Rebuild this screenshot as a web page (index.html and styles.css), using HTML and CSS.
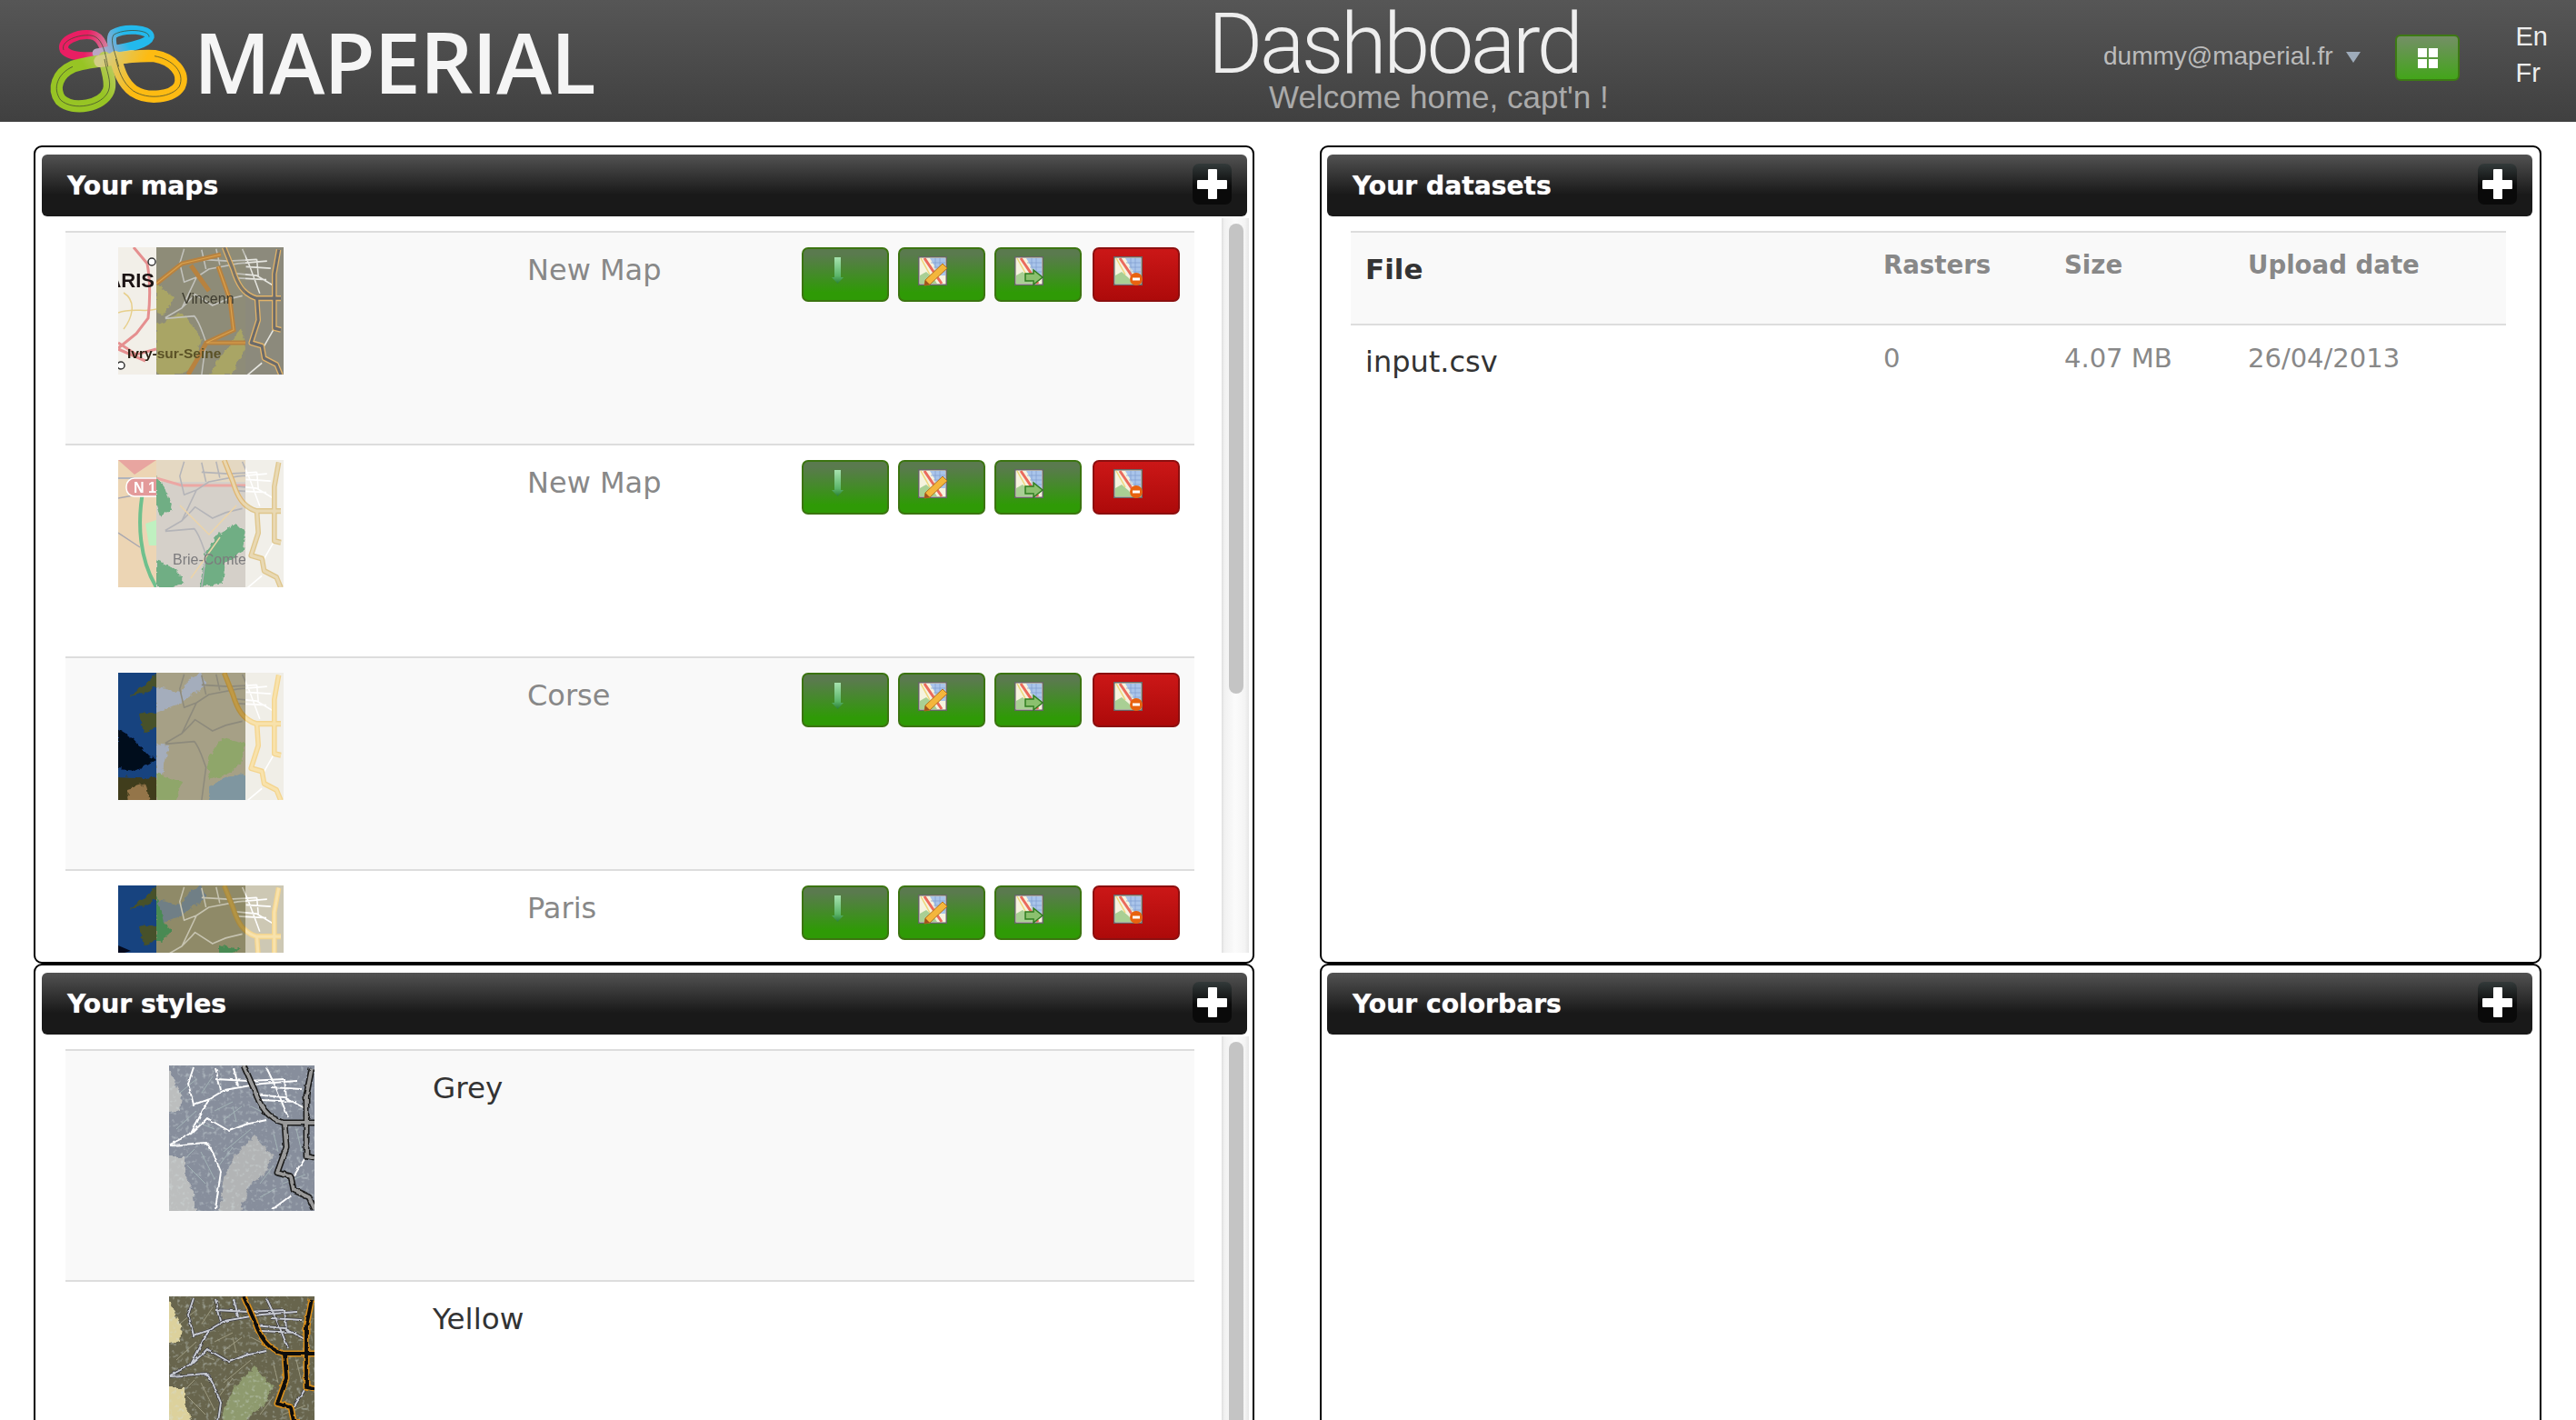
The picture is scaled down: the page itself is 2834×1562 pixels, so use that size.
FILE: index.html
```html
<!DOCTYPE html>
<html lang="en">
<head>
    <meta charset="UTF-8">
    <title>Maperial - Dashboard</title>
    <link rel="stylesheet" href="styles.css">
</head>
<body>
    <!-- shared drawings for thumbnails and button icons -->
    <svg class="sprites" aria-hidden="true">
        <defs>
            <linearGradient id="lg-pink" gradientUnits="userSpaceOnUse" x1="50" y1="90" x2="230" y2="120"><stop offset="0.45" stop-color="#e91e63"/><stop offset="1" stop-color="#c9a7b5"/></linearGradient>
            <linearGradient id="lg-blue" gradientUnits="userSpaceOnUse" x1="340" y1="50" x2="190" y2="120"><stop offset="0.45" stop-color="#23b9ec"/><stop offset="1" stop-color="#bba6c4"/></linearGradient>
            <linearGradient id="lg-green" gradientUnits="userSpaceOnUse" x1="60" y1="260" x2="270" y2="120"><stop offset="0.45" stop-color="#97c424"/><stop offset="1" stop-color="#d4cf8c"/></linearGradient>
            <linearGradient id="lg-orange" gradientUnits="userSpaceOnUse" x1="430" y1="240" x2="190" y2="130"><stop offset="0.5" stop-color="#fdbb12"/><stop offset="1" stop-color="#d3cd86"/></linearGradient>
            <linearGradient id="lg-arrow" x1="0" y1="0" x2="0" y2="1"><stop offset="0" stop-color="#a6e2ae"/><stop offset=".7" stop-color="#5cb56a"/><stop offset="1" stop-color="#2a7f36"/></linearGradient>

            <filter id="rough" x="-5%" y="-5%" width="110%" height="110%">
                <feTurbulence type="fractalNoise" baseFrequency=".16" numOctaves="2" seed="4"/>
                <feDisplacementMap in="SourceGraphic" scale="7" xChannelSelector="R" yChannelSelector="G"/>
            </filter>
            <filter id="wiggle" x="-5%" y="-5%" width="110%" height="110%">
                <feTurbulence type="fractalNoise" baseFrequency=".12" numOctaves="2" seed="9"/>
                <feDisplacementMap in="SourceGraphic" scale="3" xChannelSelector="R" yChannelSelector="G"/>
            </filter>
            <filter id="speckle" x="0" y="0" width="100%" height="100%">
                <feTurbulence type="fractalNoise" baseFrequency=".22" numOctaves="2" seed="2"/>
                <feColorMatrix values="0 0 0 0 .66  0 0 0 0 .74  0 0 0 0 .74  0 0 0 1.5 -.82"/>
            </filter>

            <clipPath id="strip-l"><rect width="42" height="140"/></clipPath>
            <clipPath id="strip-m"><rect x="42" width="98" height="140"/></clipPath>
            <clipPath id="strip-r"><rect x="140" width="42" height="140"/></clipPath>

            <path id="minor-path" d="M1 87 24 75 37 63 42 58 66 72 84 65 107 60M24 75 44 37 61 27 101 20 141 17M1 88 41 85C48 92 52 105 57 117L51 158M27 2 21 20 27 43 44 37M51 3 57 27M107 2 117 23 131 57M94 32 127 35 151 48M51 15 87 17 127 15M151 100 137 122M114 158 134 143M71 2 76 22M127 15 129 36M101 38 140 40M112 24 146 26"/>
            <path id="hw-path" d="M82 0 94 27C100 45 108 58 126 63H160M127 63 129 90 119 118 134 122 137 137 154 145 160 158M157 3 151 33V100L160 102"/>
            <g id="roads">
                <use href="#minor-path" class="minor-case"/>
                <use href="#minor-path" class="minor"/>
                <use href="#hw-path" class="hw-case"/>
                <use href="#hw-path" class="hw-core"/>
            </g>
            <g id="map-roads" transform="translate(51 0) scale(.8 .89)"><use href="#roads"/></g>

            <g id="style-art">
                <rect class="st-base" width="160" height="160"/>
                <g filter="url(#rough)">
                    <path class="st-land2" d="M-5 -5 14 33 12 50 -5 53ZM-5 100H17V118L27 140 31 165H-5Z"/>
                    <path class="st-land" d="M61 123 74 97 94 77 114 100 107 117 87 133 77 165H55Z"/>
                </g>
                <rect class="st-speckle" width="160" height="160" filter="url(#speckle)"/>
                <path class="st-fine" d="M8 70 30 50M50 50 70 40M60 60 80 45M90 45 110 55M20 110 40 130M35 95 50 125M60 95 90 70M100 130 115 110M125 130 150 120M140 70 146 95M12 30 30 15M70 90 55 110M115 75 120 95M36 30 48 12M70 45 74 62M30 62 50 70M20 100 28 92M100 145 118 135"/>
                <g filter="url(#wiggle)"><use href="#roads"/></g>
            </g>

            <g id="map-icon">
                <rect x=".75" y=".75" width="30.5" height="30.5" fill="#f6f3df" stroke="#666" stroke-width="1.5"/>
                <path d="M13 2H30V21H24Z" fill="#a9c4ea"/>
                <path d="M19 2V21M24 2V21M14 7H30M17 12H30M20 17H30" stroke="#7f9fd0" stroke-width=".7"/>
                <path d="M2 30V21L9 17 17 24 21 30Z" fill="#a9cf94"/>
                <path d="M7 2 26 30" stroke="#ea6a5c" stroke-width="3"/>
                <path d="M3 2 13 20" stroke="#eed77a" stroke-width="1.5"/>
            </g>
            <g id="ic-down"><path d="M14 1H21V23H24L17.5 30 11 23H14Z" fill="url(#lg-arrow)"/></g>
            <g id="ic-edit"><use href="#map-icon"/><path d="M27 8 32 13 13 31 7 32 8 26Z" fill="#f4b63c" stroke="#b5741e"/><path d="M7 32 8 26 13 31Z" fill="#a0521e"/></g>
            <g id="ic-open"><use href="#map-icon"/><path d="M12 19H21V15L31 23 21 31V27H12Z" fill="#8bc06e" stroke="#2f7d1f" stroke-width="1.5"/></g>
            <g id="ic-del"><use href="#map-icon"/><circle cx="25" cy="25" r="7" fill="#e8620f"/><rect x="21" y="23.5" width="8" height="3" fill="#fff"/></g>
        </defs>
    </svg>

    <header class="topbar">
        <div class="brand">
            <svg class="brand-mark" viewBox="0 0 495 330">
                <g fill="none" stroke-linecap="round">
                    <path stroke-width="30" stroke="url(#lg-pink)" d="M240 118C170 128 85 135 62 105 48 72 110 50 150 55 188 60 198 105 208 165"/>
                    <path stroke-width="30" stroke="url(#lg-blue)" d="M170 115C240 100 335 92 344 62 345 35 262 30 224 52 208 72 230 120 240 165"/>
                    <path stroke-width="40" stroke="url(#lg-green)" d="M285 125C200 140 130 145 90 160 40 182 22 232 50 270 92 308 188 290 208 240 220 210 200 170 195 130"/>
                    <path stroke-width="40" stroke="url(#lg-orange)" d="M180 142C260 130 310 122 360 125 420 135 462 180 442 225 420 260 340 272 290 240 252 212 242 170 230 128"/>
                </g>
                <g fill="none" stroke="#3f4a30" stroke-opacity=".75" stroke-width="3">
                    <path d="M60 105C48 75 110 52 150 57 186 62 196 105 206 160"/>
                    <path d="M342 62C344 37 262 33 226 54 210 72 232 120 242 160"/>
                    <path d="M90 160C40 182 22 232 50 270 92 308 188 290 208 240 220 210 200 170 195 135"/>
                    <path d="M360 125C420 135 462 180 442 225 420 260 340 272 290 240 252 212 242 170 232 135"/>
                </g>
            </svg>
            <span class="brand-name">MAPERIAL</span>
        </div>
        <div class="page-title">
            <h1>Dashboard</h1>
            <p>Welcome home, capt'n !</p>
        </div>
        <div class="account">
            <span class="account-mail">dummy@maperial.fr</span>
            <span class="caret"></span>
            <a class="apps-btn"><span class="apps-grid"><i></i><i></i><i></i><i></i></span></a>
        </div>
        <div class="langs">
            <span>En</span>
            <span>Fr</span>
        </div>
    </header>

    <main class="board">
        <section class="panel panel-left">
            <div class="panel-bar"><h2>Your maps</h2><a class="add-btn"></a></div>
            <div class="panel-body">
                <div class="list">
                    <div class="row row-odd map-row">
                        <svg class="map-thumb" viewBox="0 0 182 140">
                            <g clip-path="url(#strip-l)">
                                <rect width="42" height="140" fill="#f2efe8"/>
                                <path d="M6 50C22 60 14 80 6 90M0 72C15 66 30 72 42 68" fill="none" stroke="#e7cf8b" stroke-width="1.5"/>
                                <path d="M17 0 32 18C36 40 35 60 33 78L20 95 0 111M0 105 20 118 42 112M0 112 30 125" fill="none" stroke="#e58f8f" stroke-width="3"/>
                                <circle cx="37" cy="16" r="4" fill="#fff" stroke="#333" stroke-width="1.5"/>
                                <circle cx="3" cy="130" r="4" fill="#fff" stroke="#333" stroke-width="1.5"/>
                                <text class="map-label map-label-big" x="40" y="44" text-anchor="end">ARIS</text>
                                <text class="map-label map-label-town" x="10" y="122" fill="#2a2014">Ivry-sur-Seine</text>
                            </g>
                            <g clip-path="url(#strip-m)">
                                <rect x="42" width="98" height="140" fill="#8e8c78"/>
                                <path filter="url(#rough)" d="M42 85 70 72 92 100 84 130 70 140H42ZM100 140 135 90 140 110 125 140ZM42 40 62 55 50 75 42 72Z" fill="#a9a565"/>
                                <g class="tone-paris-m"><use href="#map-roads"/></g>
                                <path d="M42 40 70 18 113 8M80 20 100 48M110 21 123 58 127 91 97 105 90 118 77 140M97 105 140 105" fill="none" stroke="#b8823f" stroke-width="5"/>
                                <path d="M42 40 70 18 113 8M110 21 123 58 127 91 97 105 140 105" fill="none" stroke="#dba24d" stroke-width="1.2"/>
                                <text class="map-label-soft" x="70" y="62" fill="#3e3c30">Vincenn</text>
                                <text class="map-label map-label-town" x="10" y="122" fill="#5a5126">Ivry-sur-Seine</text>
                            </g>
                            <g clip-path="url(#strip-r)">
                                <rect x="140" width="42" height="140" fill="#8c8a7c"/>
                                <g class="tone-paris-r"><use href="#map-roads"/></g>
                            </g>
                        </svg>
                        <span class="row-name map-name">New Map</span>
                        <div class="row-actions">
                            <a class="btn btn-green"><svg class="btn-icon" viewBox="0 0 32 32"><use href="#ic-down"/></svg></a>
                            <a class="btn btn-green"><svg class="btn-icon" viewBox="0 0 32 32"><use href="#ic-edit"/></svg></a>
                            <a class="btn btn-green"><svg class="btn-icon" viewBox="0 0 32 32"><use href="#ic-open"/></svg></a>
                            <a class="btn btn-red"><svg class="btn-icon" viewBox="0 0 32 32"><use href="#ic-del"/></svg></a>
                        </div>
                    </div>
                    <div class="row map-row">
                        <svg class="map-thumb" viewBox="0 0 182 140">
                            <g clip-path="url(#strip-l)">
                                <rect width="42" height="140" fill="#ecd5b4"/>
                                <path d="M0 0 18 16 42 0" fill="#e8a5a0"/>
                                <path d="M0 20H42" stroke="#b0b4bc" stroke-width="2"/>
                                <path d="M0 42 22 38M0 80 24 96" stroke="#a9a8b0" stroke-width="1.5"/>
                                <path d="M28 30C20 70 24 110 42 140" fill="none" stroke="#6fc08d" stroke-width="4"/>
                                <path d="M30 70 42 66V94H34Z" fill="#bff0c0"/>
                                <rect x="9" y="20" width="50" height="20" rx="9" fill="#e39a9a" stroke="#fff" stroke-width="1.5"/>
                                <text class="map-label map-label-shield" x="17" y="36" fill="#fff">N 1</text>
                            </g>
                            <g clip-path="url(#strip-m)">
                                <rect x="42" width="98" height="140" fill="#d5d0c9"/>
                                <path d="M42 0H140V24H42Z" fill="#e4d8c2"/>
                                <path d="M42 20 70 28 140 28" fill="none" stroke="#eca7a3" stroke-width="3"/>
                                <path filter="url(#rough)" d="M96 100 110 82 130 70 140 80 138 100 118 112 115 135 90 140ZM42 110 58 116 74 135 60 140H42ZM42 18 52 30 60 55 46 62 42 50Z" fill="#6fae84"/>
                                <g class="tone-light-m"><use href="#map-roads"/></g>
                                <path d="M68 50 100 82 130 50M112 85 80 130" fill="none" stroke="#ecd4a8" stroke-width="1.5"/>
                                <text class="map-label-soft" x="60" y="115" fill="#7c7b7d">Brie-Comte-</text>
                            </g>
                            <g clip-path="url(#strip-r)">
                                <rect x="140" width="42" height="140" fill="#f1efe9"/>
                                <g class="tone-light-r"><use href="#map-roads"/></g>
                            </g>
                        </svg>
                        <span class="row-name map-name">New Map</span>
                        <div class="row-actions">
                            <a class="btn btn-green"><svg class="btn-icon" viewBox="0 0 32 32"><use href="#ic-down"/></svg></a>
                            <a class="btn btn-green"><svg class="btn-icon" viewBox="0 0 32 32"><use href="#ic-edit"/></svg></a>
                            <a class="btn btn-green"><svg class="btn-icon" viewBox="0 0 32 32"><use href="#ic-open"/></svg></a>
                            <a class="btn btn-red"><svg class="btn-icon" viewBox="0 0 32 32"><use href="#ic-del"/></svg></a>
                        </div>
                    </div>
                    <div class="row row-odd map-row">
                        <svg class="map-thumb" viewBox="0 0 182 140">
                            <g clip-path="url(#strip-l)">
                                <rect width="42" height="140" fill="#17437f"/>
                                <path filter="url(#rough)" d="M14 26 22 16 30 14 42 0V16L28 22ZM22 46 34 44 42 46V60L30 66Z" fill="#46512a"/>
                                <path filter="url(#rough)" d="M0 62 16 72 34 92 42 96 20 108 0 106Z" fill="#040a1e"/>
                                <path filter="url(#rough)" d="M-4 114 46 116V144H-4Z" fill="#3f3c1e"/>
                                <path filter="url(#rough)" d="M10 128 30 122 36 144H12Z" fill="#94744a"/>
                            </g>
                            <g clip-path="url(#strip-m)">
                                <rect x="42" width="98" height="140" fill="#a6a086"/>
                                <path filter="url(#rough)" d="M42 16 70 22 78 6 92 0 96 14 66 34 42 44ZM42 78 56 80 48 112 42 114Z" fill="#a4adbc"/>
                                <path filter="url(#rough)" d="M42 110 70 120 62 144H42ZM98 95 115 72 140 78 135 100 118 112 100 118Z" fill="#8fa66a"/>
                                <path filter="url(#rough)" d="M100 125 120 115 144 110V144H100Z" fill="#7f96a0"/>
                                <g class="tone-corse-m"><use href="#map-roads"/></g>
                            </g>
                            <g clip-path="url(#strip-r)">
                                <rect x="140" width="42" height="140" fill="#f0eee7"/>
                                <g class="tone-corse-r"><use href="#map-roads"/></g>
                            </g>
                        </svg>
                        <span class="row-name map-name">Corse</span>
                        <div class="row-actions">
                            <a class="btn btn-green"><svg class="btn-icon" viewBox="0 0 32 32"><use href="#ic-down"/></svg></a>
                            <a class="btn btn-green"><svg class="btn-icon" viewBox="0 0 32 32"><use href="#ic-edit"/></svg></a>
                            <a class="btn btn-green"><svg class="btn-icon" viewBox="0 0 32 32"><use href="#ic-open"/></svg></a>
                            <a class="btn btn-red"><svg class="btn-icon" viewBox="0 0 32 32"><use href="#ic-del"/></svg></a>
                        </div>
                    </div>
                    <div class="row map-row">
                        <svg class="map-thumb" viewBox="0 0 182 140">
                            <g clip-path="url(#strip-l)">
                                <rect width="42" height="140" fill="#17437f"/>
                                <path filter="url(#rough)" d="M14 26 22 16 30 14 42 0V16L28 22ZM22 46 34 44 42 46V60L30 66Z" fill="#46512a"/>
                                <path d="M0 66 14 72 0 76Z" fill="#040a1e"/>
                            </g>
                            <g clip-path="url(#strip-m)">
                                <rect x="42" width="98" height="140" fill="#8f8a68"/>
                                <path filter="url(#rough)" d="M42 16 70 22 78 6 92 0 96 14 66 34 42 44Z" fill="#6f7f86"/>
                                <path filter="url(#rough)" d="M42 10 50 40 60 50 48 62 42 60ZM110 66 135 70 125 76H110Z" fill="#4a8a52"/>
                                <g class="tone-paris2-m"><use href="#map-roads"/></g>
                            </g>
                            <g clip-path="url(#strip-r)">
                                <rect x="140" width="42" height="140" fill="#cdc8b4"/>
                                <g class="tone-corse-r"><use href="#map-roads"/></g>
                            </g>
                        </svg>
                        <span class="row-name map-name">Paris</span>
                        <div class="row-actions">
                            <a class="btn btn-green"><svg class="btn-icon" viewBox="0 0 32 32"><use href="#ic-down"/></svg></a>
                            <a class="btn btn-green"><svg class="btn-icon" viewBox="0 0 32 32"><use href="#ic-edit"/></svg></a>
                            <a class="btn btn-green"><svg class="btn-icon" viewBox="0 0 32 32"><use href="#ic-open"/></svg></a>
                            <a class="btn btn-red"><svg class="btn-icon" viewBox="0 0 32 32"><use href="#ic-del"/></svg></a>
                        </div>
                    </div>
                </div>
                <div class="scrolltrack"><div class="scrollthumb"></div></div>
            </div>
        </section>

        <section class="panel panel-right">
            <div class="panel-bar"><h2>Your datasets</h2><a class="add-btn"></a></div>
            <div class="panel-body">
                <table class="data-table">
                    <thead>
                        <tr>
                            <th class="col-file">File</th>
                            <th class="col-rasters">Rasters</th>
                            <th class="col-size">Size</th>
                            <th>Upload date</th>
                        </tr>
                    </thead>
                    <tbody>
                        <tr>
                            <td class="col-file">input.csv</td>
                            <td>0</td>
                            <td>4.07 MB</td>
                            <td>26/04/2013</td>
                        </tr>
                    </tbody>
                </table>
            </div>
        </section>

        <section class="panel panel-left">
            <div class="panel-bar"><h2>Your styles</h2><a class="add-btn"></a></div>
            <div class="panel-body">
                <div class="list">
                    <div class="row row-odd style-row">
                        <svg class="style-thumb style-grey" viewBox="0 0 160 160"><use href="#style-art"/></svg>
                        <span class="row-name style-name">Grey</span>
                    </div>
                    <div class="row style-row">
                        <svg class="style-thumb style-yellow" viewBox="0 0 160 160"><use href="#style-art"/></svg>
                        <span class="row-name style-name">Yellow</span>
                    </div>
                </div>
                <div class="scrolltrack"><div class="scrollthumb"></div></div>
            </div>
        </section>

        <section class="panel panel-right">
            <div class="panel-bar"><h2>Your colorbars</h2><a class="add-btn"></a></div>
            <div class="panel-body"></div>
        </section>
    </main>
</body>
</html>
```

FILE: styles.css
```css
:root {
    --line: #dddddd;
    --stripe: #f9f9f9;
    --muted: #888888;
    --dark: #333333;
    --body-font: "DejaVu Sans", sans-serif;
    --head-font: "Liberation Sans", Arial, sans-serif;
}

html, body {
    height: 100%;
}

body {
    margin: 0;
    overflow: hidden;
    background: #fff;
    font-family: var(--body-font);
    color: var(--dark);
}

.sprites {
    display: block;
    width: 0;
    height: 0;
}

/* top bar */
.topbar {
    display: flex;
    height: 134px;
    background: linear-gradient(#565656, #404040);
}

.brand {
    display: flex;
    flex: none;
    width: 1279px;
    margin-left: 50px;
    padding-top: 20px;
    box-sizing: border-box;
}

.brand-mark {
    flex: none;
    width: 165px;
    height: 110px;
}

.brand-name {
    margin: 0 0 0 -2px;
    height: 100px;
    font-family: "Open Sans", sans-serif;
    font-size: 92px;
    font-weight: 600;
    line-height: 95px;
    letter-spacing: -1.2px;
    color: #f5f5f5;
}

.page-title {
    flex: none;
    width: 465px;
}

.page-title h1 {
    margin: 0;
    padding-top: 11px;
    font-family: Roboto, sans-serif;
    font-size: 92px;
    font-weight: 300;
    line-height: 76px;
    letter-spacing: -3.4px;
    color: #eeeeee;
}

.page-title p {
    margin: 0 0 0 67px;
    font-family: var(--head-font);
    font-size: 35px;
    line-height: 40px;
    color: #aaaaaa;
}

.account {
    display: flex;
    align-items: center;
    flex: none;
    height: 124px;
    margin-left: 520px;
}

.account-mail {
    font-family: var(--head-font);
    font-size: 28px;
    color: #bbbbbb;
}

.caret {
    width: 0;
    height: 0;
    margin: 2px 0 0 15px;
    border-left: 8px solid transparent;
    border-right: 8px solid transparent;
    border-top: 12px solid #9eabba;
}

.apps-btn {
    display: flex;
    align-items: center;
    justify-content: center;
    box-sizing: border-box;
    width: 71px;
    height: 51px;
    margin: 3px 0 0 38px;
    border: 2px solid #3d7a14;
    border-radius: 6px;
    background: linear-gradient(#748f66, #43a51a);
}

.apps-grid {
    display: grid;
    grid-template-columns: 10px 10px;
    grid-template-rows: 10px 10px;
    gap: 2px;
}

.apps-grid i {
    background: #fff;
}

.langs {
    display: flex;
    flex-direction: column;
    margin-left: 61px;
    padding-top: 20px;
    font-family: var(--head-font);
    font-size: 29px;
    line-height: 40px;
    color: #eeeeee;
}

/* panels */
.board {
    display: grid;
    grid-template-columns: 1343px 1344px;
    grid-auto-rows: 900px;
    column-gap: 72px;
    margin: 26px 0 0 37px;
}

.panel {
    box-sizing: border-box;
    padding-top: 8px;
    border: 2px solid #000;
    border-radius: 9px;
    overflow: hidden;
}

.panel-left {
    --inset: 7px;
}

.panel-right {
    --inset: 6px;
}

.panel-bar {
    display: flex;
    align-items: center;
    justify-content: space-between;
    box-sizing: border-box;
    width: 1326px;
    height: 68px;
    margin-left: var(--inset);
    padding: 0 17px 0 28px;
    border-radius: 6px;
    background: linear-gradient(#525252, #191919 65%);
}

.panel-bar h2 {
    margin: 0;
    font-size: 28.2px;
    font-weight: bold;
    color: #fff;
    text-shadow: 0 0 1px rgba(255, 255, 255, 0.8);
}

.add-btn {
    position: relative;
    width: 43px;
    height: 45px;
    margin-top: -3px;
    border-radius: 7px;
    background: linear-gradient(#333a3a, #0a0a0a 55%);
}

.add-btn::before,
.add-btn::after {
    content: "";
    position: absolute;
    background: #fff;
    border-radius: 1px;
}

.add-btn::before {
    left: 5px;
    top: 18px;
    width: 33px;
    height: 10px;
}

.add-btn::after {
    left: 17px;
    top: 6px;
    width: 10px;
    height: 33px;
}

.panel-body {
    display: flex;
    height: 808px;
    margin-top: 2px;
    padding-left: calc(var(--inset) + 26px);
    overflow: hidden;
}

.list {
    flex: none;
    width: 1242px;
    height: 794px;
    margin-top: 14px;
    overflow: hidden;
}

.row {
    display: flex;
    box-sizing: border-box;
    padding-top: 16px;
    border-top: 2px solid var(--line);
}

.row-odd {
    background: var(--stripe);
}

.map-row {
    height: 234px;
    padding-left: 58px;
}

.style-row {
    height: 254px;
    padding-left: 114px;
}

.map-thumb {
    flex: none;
    width: 182px;
    height: 140px;
    filter: blur(0.5px);
}

.style-thumb {
    flex: none;
    width: 160px;
    height: 160px;
    filter: blur(0.4px);
}

.row-name {
    font-size: 32px;
    line-height: 50px;
}

.map-name {
    flex: none;
    width: 302px;
    margin-left: 268px;
    color: var(--muted);
}

.style-name {
    margin-left: 130px;
    font-size: 32.6px;
    color: var(--dark);
}

.row-actions {
    display: flex;
    gap: 10px;
}

.btn {
    display: block;
    box-sizing: border-box;
    width: 96px;
    height: 60px;
    padding: 8px 0 0 20px;
    border: 2px solid;
    border-radius: 7px;
}

.btn:last-child {
    margin-left: 2px;
    padding-left: 21px;
}

.btn-green {
    border-color: #3b7410;
    background: linear-gradient(#5a7a4e 10%, #2f9a06 85%);
}

.btn-red {
    border-color: #8c0f0f;
    background: linear-gradient(#cb1717, #ad0a0a);
}

.btn-icon {
    display: block;
    width: 32px;
    height: 32px;
    overflow: visible;
}

.scrolltrack {
    flex: none;
    width: 30px;
    margin-left: 30px;
    background: linear-gradient(90deg, #dedede, #f1f1f1 3px, #fbfbfb 50%, #f4f4f4 85%, #e6e6e6);
}

.scrollthumb {
    width: 16px;
    height: 517px;
    margin: 6px 0 0 8px;
    border-radius: 8px;
    background: #c4c4c4;
}

/* datasets table */
.data-table {
    table-layout: fixed;
    align-self: flex-start;
    width: 1271px;
    margin-top: 14px;
    border-collapse: separate;
    border-spacing: 0;
    font-size: 29px;
    color: var(--muted);
}

.data-table th {
    box-sizing: border-box;
    height: 104px;
    padding: 19px 0 0;
    border-top: 2px solid var(--line);
    border-bottom: 2px solid var(--line);
    background: var(--stripe);
    text-align: left;
    font-size: 27.6px;
    line-height: 34px;
    vertical-align: top;
}

.data-table td {
    padding: 17px 0 0;
    font-weight: normal;
    line-height: 38px;
    vertical-align: top;
}

.data-table .col-file {
    box-sizing: border-box;
    width: 586px;
    padding-left: 16px;
    font-size: 32px;
    color: var(--dark);
}

.data-table th.col-file {
    padding-top: 23px;
    font-size: 31px;
}

.data-table td.col-file {
    padding-top: 21px;
}

.col-rasters {
    width: 199px;
}

.col-size {
    width: 202px;
}

/* map thumbnails: colours per layer */
.minor,
.minor-case,
.hw-case,
.hw-core,
.st-fine {
    fill: none;
    stroke-linejoin: round;
}

.minor {
    stroke: var(--minor, #fff);
    stroke-width: 1.9;
}

.minor-case {
    stroke: var(--minor-case, none);
    stroke-width: 3.4;
}

.hw-case {
    stroke: var(--hw-case, #000);
    stroke-width: 7;
}

.hw-core {
    stroke: var(--hw-core, #999);
    stroke-width: 3.8;
}

.st-base {
    fill: var(--st-base);
}

.st-land {
    fill: var(--st-land);
}

.st-land2 {
    fill: var(--st-land2);
}

.st-fine {
    stroke: var(--st-fine);
    stroke-width: 0.8;
}

.style-grey {
    --st-base: #878e9c;
    --st-land: #b2b4b5;
    --st-land2: #bcbebe;
    --st-fine: #a9bcbc;
    --minor: #ffffff;
    --hw-case: #1c1c1c;
    --hw-core: #9a9a9a;
}

.style-yellow {
    --st-base: #68654d;
    --st-land: #8e9a6e;
    --st-land2: #dcd19c;
    --st-fine: #a9a78e;
    --minor: #c9ccd4;
    --minor-case: #3a3a40;
    --hw-case: #d98f1c;
    --hw-core: #0c0c0c;
}

.tone-paris-m {
    --minor: #c2c2bc;
    --hw-case: #e0b268;
    --hw-core: #7a7468;
}

.tone-paris-r {
    --minor: #e6e6e0;
    --hw-case: #e3b469;
    --hw-core: #6b6b6b;
}

.tone-light-m {
    --minor: #b4b4b8;
    --hw-case: #dfb672;
    --hw-core: #e9d6ae;
}

.tone-light-r {
    --minor: #ffffff;
    --hw-case: #dfc68c;
    --hw-core: #e9d9b4;
}

.tone-corse-m {
    --minor: #8d8a7c;
    --hw-case: #b58e3c;
    --hw-core: #c09a46;
}

.tone-corse-r {
    --minor: #ffffff;
    --hw-case: #f4d58e;
    --hw-core: #f8e2ac;
}

.tone-paris2-m {
    --minor: #c6c3b0;
    --hw-case: #a98a40;
    --hw-core: #b39444;
}

.map-label {
    font-family: var(--head-font);
    font-weight: bold;
}

.map-label-big {
    font-size: 22px;
    fill: #1c1414;
}

.map-label-town {
    font-size: 15.5px;
}

.map-label-shield {
    font-size: 16px;
}

.map-label-soft {
    font-family: var(--head-font);
    font-size: 16px;
}
```
